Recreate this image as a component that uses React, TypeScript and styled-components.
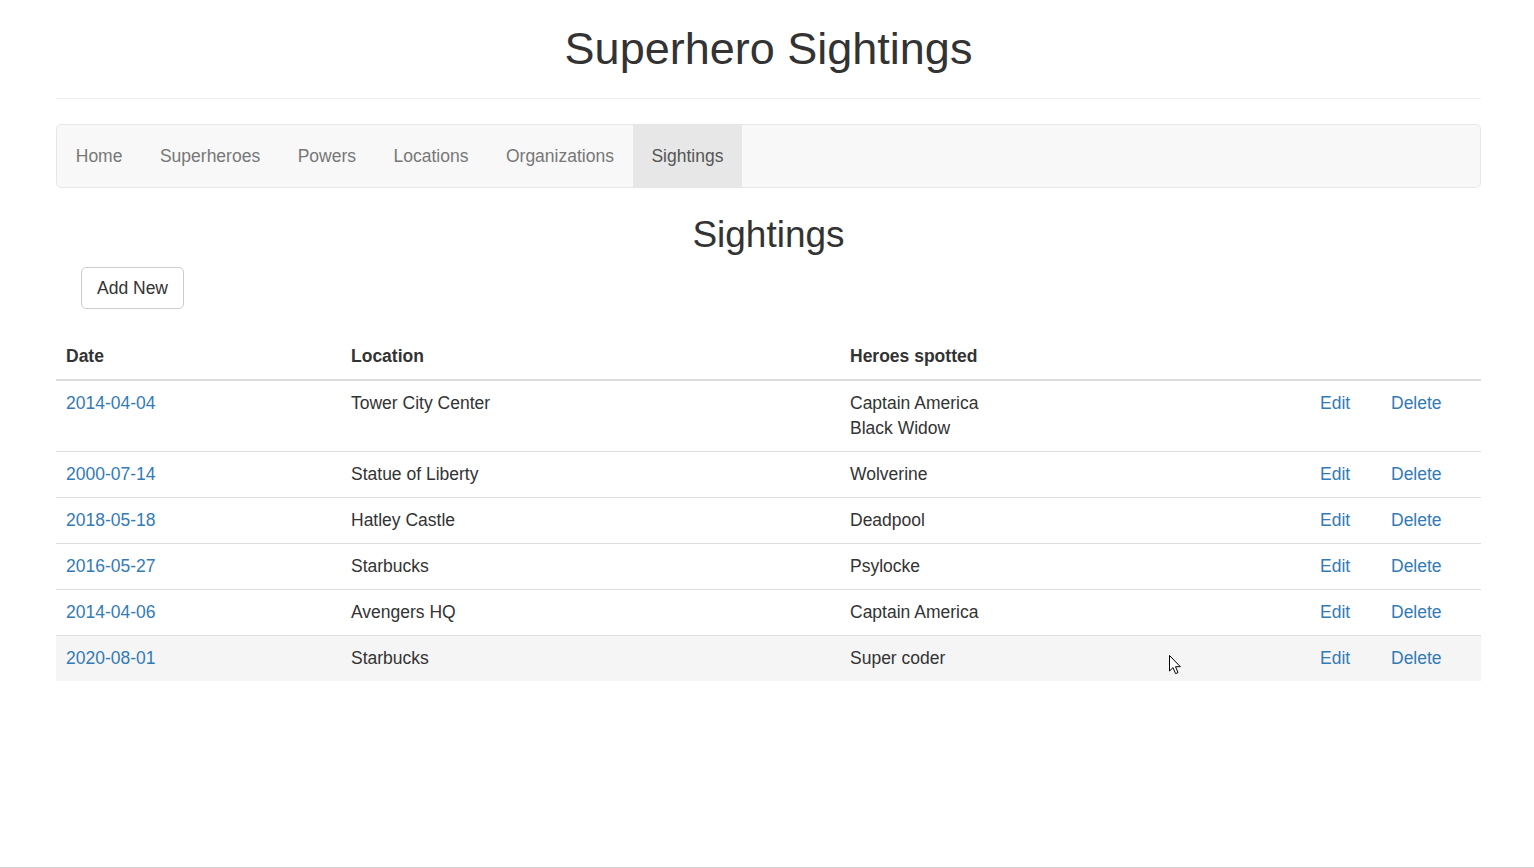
import React from "react";
import styled, { createGlobalStyle } from "styled-components";

const GlobalStyle = createGlobalStyle`
  * { box-sizing: border-box; }
  html, body { margin: 0; padding: 0; background: #fff; }
  body {
    font-family: "Liberation Sans", Arial, Helvetica, sans-serif;
    font-size: 17.5px;
    line-height: 25px;
    color: #333;
  }
`;

const Page = styled.div`
  position: relative;
  min-height: 868px;
  border-bottom: 1px solid #d2d2d2;
`;

const Container = styled.div`
  width: 1425px;
  margin-left: 56px;
`;

const PageHeader = styled.header`
  padding: 24px 0 24px;
  border-bottom: 1px solid #eee;
  margin-bottom: 25px;
`;

const Title = styled.h1`
  margin: 0;
  font-size: 45px;
  line-height: 50px;
  font-weight: 400;
  text-align: center;
  color: #333;
`;

const Navbar = styled.nav`
  display: flex;
  height: 64px;
  background: #f8f8f8;
  border: 1px solid #e7e7e7;
  border-radius: 5px;
  margin-bottom: 26px;
`;

const NavLink = styled.a<{ $active?: boolean }>`
  display: block;
  padding: 18.5px 18.75px;
  line-height: 25px;
  font-size: 17.5px;
  color: ${(p) => (p.$active ? "#555" : "#777")};
  background: ${(p) => (p.$active ? "#e7e7e7" : "transparent")};
  text-decoration: none;
  cursor: pointer;
`;

const SectionTitle = styled.h2`
  margin: 0 0 12px;
  font-size: 37px;
  line-height: 41px;
  font-weight: 400;
  text-align: center;
  color: #333;
`;

const Toolbar = styled.div`
  padding-left: 25px;
  margin-bottom: 25px;
`;

const Button = styled.button`
  font-family: inherit;
  font-size: 17.5px;
  line-height: 25px;
  padding: 7.5px 15px;
  color: #333;
  background: #fff;
  border: 1px solid #ccc;
  border-radius: 5px;
  cursor: pointer;
`;

const Table = styled.table`
  width: 1425px;
  table-layout: fixed;
  border-collapse: collapse;
  border-spacing: 0;
`;

const Th = styled.th`
  text-align: left;
  font-weight: 700;
  padding: 10px;
  line-height: 25px;
  vertical-align: bottom;
  border-bottom: 2.5px solid #ddd;
`;

const Row = styled.tr<{ $hover?: boolean }>`
  background: ${(p) => (p.$hover ? "#f5f5f5" : "transparent")};
`;

const Td = styled.td`
  padding: 10px;
  line-height: 25px;
  vertical-align: top;
  border-top: 1px solid #ddd;
`;

const Link = styled.a`
  color: #337ab7;
  text-decoration: none;
  cursor: pointer;
`;

const Cursor = styled.svg`
  position: absolute;
  left: 1169px;
  top: 655px;
  pointer-events: none;
`;

const navItems = ["Home", "Superheroes", "Powers", "Locations", "Organizations", "Sightings"];

const rows = [
  { date: "2014-04-04", location: "Tower City Center", heroes: ["Captain America", "Black Widow"] },
  { date: "2000-07-14", location: "Statue of Liberty", heroes: ["Wolverine"] },
  { date: "2018-05-18", location: "Hatley Castle", heroes: ["Deadpool"] },
  { date: "2016-05-27", location: "Starbucks", heroes: ["Psylocke"] },
  { date: "2014-04-06", location: "Avengers HQ", heroes: ["Captain America"] },
  { date: "2020-08-01", location: "Starbucks", heroes: ["Super coder"] },
];

export default function App() {
  return (
    <Page>
      <GlobalStyle />
      <Container>
        <PageHeader>
          <Title>Superhero Sightings</Title>
        </PageHeader>
        <Navbar>
          {navItems.map((n) => (
            <NavLink key={n} $active={n === "Sightings"}>
              {n}
            </NavLink>
          ))}
        </Navbar>
        <SectionTitle>Sightings</SectionTitle>
        <Toolbar>
          <Button>Add New</Button>
        </Toolbar>
        <Table>
          <colgroup>
            <col style={{ width: 285 }} />
            <col style={{ width: 499 }} />
            <col style={{ width: 470 }} />
            <col style={{ width: 71 }} />
            <col style={{ width: 100 }} />
          </colgroup>
          <thead>
            <tr>
              <Th>Date</Th>
              <Th>Location</Th>
              <Th>Heroes spotted</Th>
              <Th></Th>
              <Th></Th>
            </tr>
          </thead>
          <tbody>
            {rows.map((r, i) => (
              <Row key={i} $hover={i === rows.length - 1}>
                <Td>
                  <Link>{r.date}</Link>
                </Td>
                <Td>{r.location}</Td>
                <Td>
                  {r.heroes.map((h) => (
                    <div key={h}>{h}</div>
                  ))}
                </Td>
                <Td>
                  <Link>Edit</Link>
                </Td>
                <Td>
                  <Link>Delete</Link>
                </Td>
              </Row>
            ))}
          </tbody>
        </Table>
      </Container>
      <Cursor width="14" height="22" viewBox="0 0 14 22">
        <path
          d="M0.5 0.5 L0.5 16 L4 12.6 L6.6 18.6 L9 17.6 L6.5 11.7 L11.3 11.7 Z"
          fill="#fff"
          stroke="#000"
          strokeWidth="1"
          strokeLinejoin="miter"
        />
      </Cursor>
    </Page>
  );
}
